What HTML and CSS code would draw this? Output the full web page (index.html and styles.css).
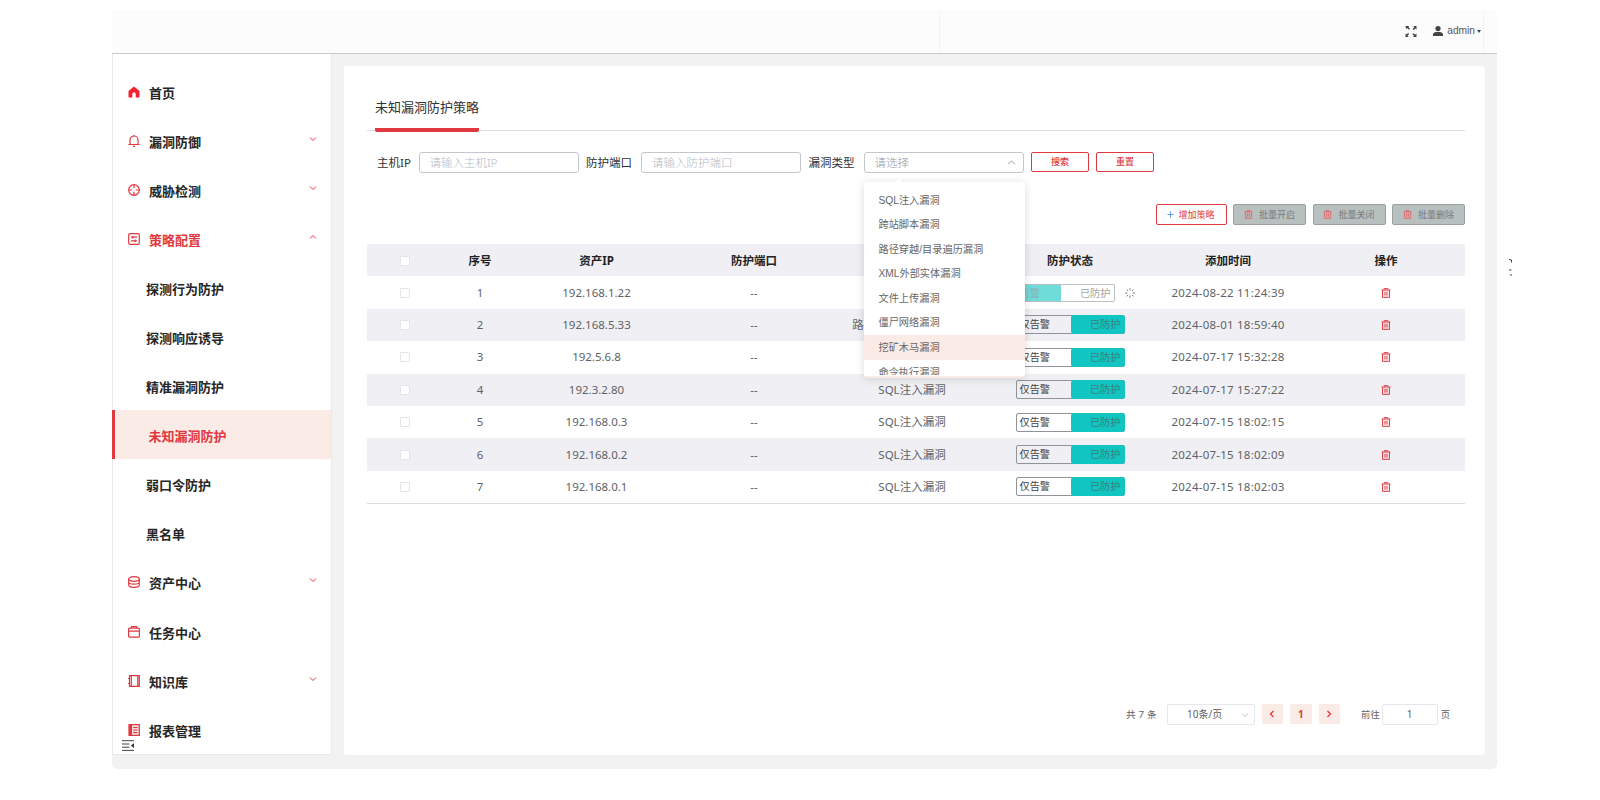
FILE: index.html
```html
<!DOCTYPE html>
<html lang="zh-CN">
<head>
    <meta charset="UTF-8">
    <meta name="viewport" content="width=device-width, initial-scale=1.0">
    <title>未知漏洞防护策略</title>
    <link rel="stylesheet" href="styles.css">
</head>
<body>
    <!-- shared icons -->
    <svg class="sprite">
        <symbol id="i-down" viewBox="0 0 8 8"><path d="M1 2.5l3 3 3-3"/></symbol>
        <symbol id="i-up" viewBox="0 0 8 8"><path d="M1 5.5l3-3 3 3"/></symbol>
        <symbol id="i-trash" viewBox="0 0 10 10"><path d="M.5 2h9M3.2 2V.6h3.6V2M1.500 2v7.400h7V2M4 4v3.500M6 4v3.500"/></symbol>
    </svg>

    <div class="app">
        <header class="header">
            <div class="header-left"></div>
            <div class="header-right">
                <svg class="icon-full" viewBox="0 0 12 12"><path d="M0 0h4.200L3.100 1.100l1.700 1.700-1.200 1.200L1.800 2.200.6 3.400zM12 0v4l-1.200-1.200-1.800 1.600-1.200-1.200L9.600 1.400 8.400 0zM0 12V8.200l1.100 1.100 1.700-1.700L4 8.800l-1.800 1.800L3.600 12zM12 12H8.200l1.200-1.200-1.800-1.800 1.200-1.200 1.800 1.800L12 8.200z"/></svg>
                <svg class="icon-user" viewBox="0 0 10 10"><circle cx="5" cy="2.6" r="2.6"/><path d="M0 10V8.200C0 6.600 2.200 6 5 6s5 .6 5 2.200V10z"/></svg>
                <span>admin</span>
                <i class="caret"></i>
            </div>
        </header>

        <div class="body">
            <nav class="sidebar">
                <ul>
                    <li>
                        <svg class="icon solid" viewBox="0 0 12 12"><path d="M6 .5L11.500 5v6.500H7.700V8a1.700 1.700 0 0 0-3.400 0v3.500H.5V5z"/></svg>首页
                    </li>
                    <li>
                        <svg class="icon" viewBox="0 0 12 12"><path d="M2 9.500V5a4 4 0 0 1 8 0v4.500M.3 9.500h11.400M5 11.300h2M6 0v1"/></svg>漏洞防御
                        <svg class="arrow"><use href="#i-down"/></svg>
                    </li>
                    <li>
                        <svg class="icon" viewBox="0 0 12 12"><circle cx="6" cy="6" r="5.300"/><path d="M6 .7v3.500M6 7.800v3.500M.7 6h3.500M7.800 6h3.500"/></svg>威胁检测
                        <svg class="arrow"><use href="#i-down"/></svg>
                    </li>
                    <li class="open">
                        <svg class="icon" viewBox="0 0 12 12"><rect x=".7" y=".7" width="10.600" height="10.600" rx="1.300"/><path d="M3 4.200h6M4.800 2.900v2.600M3 7.800h6M7.200 6.500v2.600"/></svg>策略配置
                        <svg class="arrow"><use href="#i-up"/></svg>
                    </li>
                    <li class="sub">探测行为防护</li>
                    <li class="sub">探测响应诱导</li>
                    <li class="sub">精准漏洞防护</li>
                    <li class="sub active">未知漏洞防护</li>
                    <li class="sub">弱口令防护</li>
                    <li class="sub">黑名单</li>
                    <li>
                        <svg class="icon" viewBox="0 0 12 12"><ellipse cx="6" cy="3" rx="5.300" ry="2.300"/><path d="M.7 3v6c0 1.300 2.400 2.300 5.300 2.300s5.300-1 5.300-2.300V3M.7 6c0 1.300 2.400 2.200 5.300 2.200s5.300-.9 5.300-2.200"/></svg>资产中心
                        <svg class="arrow"><use href="#i-down"/></svg>
                    </li>
                    <li>
                        <svg class="icon" viewBox="0 0 12 12"><rect x=".6" y="2.200" width="10.800" height="9" rx="1"/><path d="M.6 5.200h10.800M3.500 2.200V.700h5v1.500"/></svg>任务中心
                    </li>
                    <li>
                        <svg class="icon" viewBox="0 0 12 12"><path d="M1.500.7h9.800v10.600H1.500zM3.300.7v10.600M9.800.7v10.600M0 3.500h1.500M0 8.500h1.500"/></svg>知识库
                        <svg class="arrow"><use href="#i-down"/></svg>
                    </li>
                    <li>
                        <svg class="icon tint" viewBox="0 0 12 12"><path d="M1 .7h10.300v10.600H1zM2.200.7v10.600M3.400.7v10.600M5.200 3.500h4.200M5.200 6h4.200M5.200 8.500h4.200"/></svg>报表管理
                    </li>
                </ul>
                <svg class="collapse" viewBox="0 0 12 11"><path d="M0 .7h12M0 4h7.500M0 7.200h7.500M0 10.400h12"/><path class="tri" d="M12 3.200v4.800L8.800 5.600z"/></svg>
            </nav>

            <main class="card">
                <div class="tabs"><span class="tab">未知漏洞防护策略</span></div>

                <div class="search">
                    <label>主机IP</label>
                    <input type="text" placeholder="请输入主机IP">
                    <label>防护端口</label>
                    <input type="text" placeholder="请输入防护端口">
                    <label>漏洞类型</label>
                    <div class="select">
                        请选择
                        <svg><use href="#i-up"/></svg>
                        <div class="dropdown">
                            <ul>
                                <li>SQL注入漏洞</li>
                                <li>跨站脚本漏洞</li>
                                <li>路径穿越/目录遍历漏洞</li>
                                <li>XML外部实体漏洞</li>
                                <li>文件上传漏洞</li>
                                <li>僵尸网络漏洞</li>
                                <li class="hover">挖矿木马漏洞</li>
                                <li>命令执行漏洞</li>
                            </ul>
                        </div>
                    </div>
                    <button class="btn">搜索</button>
                    <button class="btn">重置</button>
                </div>

                <div class="toolbar">
                    <button class="btn add"><svg viewBox="0 0 8 8"><path d="M4 .5v7M.5 4h7"/></svg>增加策略</button>
                    <button class="btn off"><svg><use href="#i-trash"/></svg>批量开启</button>
                    <button class="btn off"><svg><use href="#i-trash"/></svg>批量关闭</button>
                    <button class="btn off"><svg><use href="#i-trash"/></svg>批量删除</button>
                </div>

                <table>
                    <colgroup>
                        <col class="c-check"><col class="c-no"><col class="c-ip"><col><col><col><col><col>
                    </colgroup>
                    <thead>
                        <tr>
                            <th><i class="check"></i></th>
                            <th>序号</th>
                            <th>资产IP</th>
                            <th>防护端口</th>
                            <th></th>
                            <th>防护状态</th>
                            <th>添加时间</th>
                            <th>操作</th>
                        </tr>
                    </thead>
                    <tbody id="rows"></tbody>
                </table>

                <div class="pager">
                    <span class="total">共 7 条</span>
                    <div class="size">10条/页<svg><use href="#i-down"/></svg></div>
                    <button><svg viewBox="0 0 8 8"><path d="M5.500 1l-3 3 3 3"/></svg></button>
                    <button>1</button>
                    <button><svg viewBox="0 0 8 8"><path d="M2.500 1l3 3-3 3"/></svg></button>
                    <span class="goto">前往</span>
                    <div class="page">1</div>
                    <span class="unit">页</span>
                </div>
            </main>
        </div>
    </div>
    <svg class="edge-mark" viewBox="0 0 4 20"><path d="M0 2.500l2.500.5v2.500M0 13h2.500M2 17v2"/></svg>

    <script>
        var rows = [
            ["192.168.1.22", "", "2024-08-22 11:24:39", true],
            ["192.168.5.33", "路径穿越/目录遍历漏洞", "2024-08-01 18:59:40"],
            ["192.5.6.8", "", "2024-07-17 15:32:28"],
            ["192.3.2.80", "SQL注入漏洞", "2024-07-17 15:27:22"],
            ["192.168.0.3", "SQL注入漏洞", "2024-07-15 18:02:15"],
            ["192.168.0.2", "SQL注入漏洞", "2024-07-15 18:02:09"],
            ["192.168.0.1", "SQL注入漏洞", "2024-07-15 18:02:03"]
        ];
        var spinner = '<svg class="spinner" viewBox="0 0 10 10"><path d="M5 0v2.500M5 7.500V10M0 5h2.500M7.500 5H10M1.500 1.500l1.700 1.700M6.800 6.800l1.700 1.700M8.500 1.500L6.800 3.200M3.200 6.800L1.500 8.500"/></svg>';

        document.getElementById("rows").innerHTML = rows.map(function(r, i) {
            return '<tr><td><i class="check"></i></td>' +
                '<td>' + (i + 1) + '</td>' +
                '<td>' + r[0] + '</td>' +
                '<td>--</td>' +
                '<td>' + r[1] + '</td>' +
                '<td><div class="status' + (r[3] ? ' loading' : '') + '">' +
                '<div class="switch"><span>仅告警</span><span>已防护</span></div>' + (r[3] ? spinner : '') + '</div></td>' +
                '<td class="time">' + r[2] + '</td>' +
                '<td><svg class="del"><use href="#i-trash"/></svg></td></tr>';
        }).join("");
    </script>
</body>
</html>
```

FILE: styles.css
```css
* {
    box-sizing: border-box;
}

body {
    margin: 0;
    height: 800px;
    background: #fff;
    color: #303133;
    font-family: "Noto Sans", "Noto Sans CJK SC", sans-serif;
    font-size: 11.5px;
    line-height: 16px;
    overflow: hidden;
}

ul {
    list-style: none;
    margin: 0;
    padding: 0;
}

svg {
    fill: none;
    stroke: currentColor;
    flex: none;
}

.sprite {
    display: none;
}

.app {
    width: 1385px;
    height: 759px;
    margin: 10px 0 0 112px;
    background: #f2f2f2;
    border-radius: 5px;
    overflow: hidden;
}

/* header */
.header {
    height: 44px;
    display: flex;
    background: #fcfcfc;
    border-bottom: 1px solid #cacaca;
}

.header-left {
    width: 828px;
    border-right: 1px solid #f3f3f3;
}

.header-right {
    width: 544px;
    display: flex;
    align-items: center;
    justify-content: flex-end;
    padding: 0 2px 1px 0;
    border-right: 1px solid #f3f3f3;
    font-family: "Liberation Sans", sans-serif;
    font-size: 10.2px;
    color: #555;
}

.header-right svg {
    fill: #444;
    stroke: none;
}

.icon-full {
    width: 12px;
    height: 11px;
    margin-right: 16px;
}

.icon-user {
    width: 10px;
    height: 10px;
    margin-right: 4px;
}

.caret {
    margin-left: 2px;
    border: 2.5px solid transparent;
    border-top: 3px solid #444;
    border-bottom: 0;
}

/* sidebar */
.body {
    display: flex;
}

.sidebar {
    position: relative;
    width: 220px;
    height: 701px;
    padding-top: 13px;
    background: #fff;
    border: 1px solid #e9e9e9;
    border-top: 0;
}

.sidebar li {
    display: flex;
    align-items: center;
    height: 49.05px;
    padding: 3px 14px 0 15px;
    font-size: 13px;
    font-weight: bold;
    color: #262626;
}

.sidebar .icon {
    width: 12px;
    height: 12px;
    margin: 0 9px 2px 0;
    color: #e0383f;
    stroke-width: 1.2;
}

.sidebar .icon.solid {
    fill: #f5222d;
    stroke: none;
}

.sidebar .icon.tint {
    fill: #fbdcdc;
}

.sidebar .arrow {
    width: 8px;
    height: 8px;
    margin: 0 0 6px auto;
    color: #e0383f;
}

.sidebar .open {
    color: #e0383f;
}

.sidebar .sub {
    padding-left: 33px;
}

.sidebar .active {
    margin-left: -1px;
    border-left: 3px solid #e0383f;
    background: #fbebe7;
    color: #e0383f;
    padding-left: 33.5px;
}

.collapse {
    position: absolute;
    left: 9px;
    bottom: 3px;
    width: 12px;
    height: 11px;
    color: #444;
}

.collapse .tri {
    fill: #333;
    stroke: none;
}

/* content */
.card {
    width: 1141px;
    height: 689px;
    margin: 12px 0 0 12px;
    padding: 0 20px 0 23px;
    background: #fff;
    border-radius: 3px;
}

.tabs {
    height: 65px;
    padding-left: 8px;
    border-bottom: 1px solid #dcdde0;
}

.tab {
    display: inline-block;
    height: 66px;
    padding-top: 33px;
    font-size: 13px;
    border-bottom: 4px solid #e0383f;
    border-radius: 2px;
}

.search {
    display: flex;
    align-items: center;
    height: 21px;
    margin-top: 21px;
    padding-left: 10px;
    line-height: 21px;
}

.search label {
    width: 46.5px;
    margin-right: 8.5px;
    white-space: nowrap;
}

.search label:first-child {
    width: 33px;
}

.search input,
.select {
    width: 160px;
    height: 21px;
    margin: 0 7.5px 0 0;
    padding: 0 10px;
    border: 1px solid #c3c6cc;
    border-radius: 3px;
    background: #fff;
    font: 300 11.5px/18px "Noto Sans", "Noto Sans CJK SC", sans-serif;
    color: #96999f;
}

.search input::placeholder {
    color: #b4b8c0;
}

.select {
    position: relative;
    display: flex;
    align-items: center;
    justify-content: space-between;
}

.select > svg {
    width: 9px;
    height: 9px;
    margin-right: -3px;
    stroke-width: .8;
}

.dropdown {
    position: absolute;
    z-index: 2;
    left: -1px;
    top: 29px;
    width: 161px;
    height: 196px;
    padding-top: 5.5px;
    background: #fff;
    border-bottom: 2px solid #fbebe7;
    border-radius: 3px;
    box-shadow: 0 1px 8px rgba(0, 0, 0, .15);
}

.dropdown::before {
    content: "";
    position: absolute;
    left: 31px;
    top: -3px;
    border: 4px solid transparent;
    border-top: 0;
    border-bottom: 3px solid #fff;
}

.dropdown ul {
    height: 187px;
    overflow: hidden;
}

.dropdown li {
    height: 24.6px;
    padding: 1px 0 0 15px;
    line-height: 24.6px;
    font-family: "Liberation Sans", "Noto Sans CJK SC", sans-serif;
    font-size: 10.2px;
    font-weight: 400;
    color: #666;
}

.dropdown .hover {
    background: #fbebe7;
}

.btn {
    display: flex;
    align-items: center;
    justify-content: center;
    width: 58px;
    height: 20px;
    margin: 0 7px 0 0;
    padding: 0;
    background: #fff;
    border: 1px solid #e0383f;
    border-radius: 2px;
    font: 9px/18px "Noto Sans", "Noto Sans CJK SC", sans-serif;
    color: #e0383f;
}

.search .btn {
    font-weight: 500;
    margin-bottom: 1px;
}

.toolbar {
    display: flex;
    justify-content: flex-end;
    gap: 6.5px;
    margin-top: 31px;
}

.toolbar .btn {
    width: 73px;
    height: 21px;
    margin: 0;
}

.toolbar .add {
    width: 71px;
}

.btn svg {
    width: 9px;
    height: 9px;
    margin-right: 6px;
}

.btn.add svg {
    width: 7px;
    height: 7px;
    margin-right: 4px;
    color: #4a90e2;
}

.btn.off {
    background: #b8bfbf;
    border-color: #9aa0a2;
    color: #777c7e;
}

.btn.off svg {
    color: #e56a6a;
}

/* table */
table {
    width: 1098px;
    margin-top: 19px;
    table-layout: fixed;
    border-collapse: collapse;
    border-bottom: 1px solid #dcdde0;
    text-align: center;
    color: #606266;
}

.c-check {
    width: 75px;
}

.c-no {
    width: 76px;
}

.c-ip {
    width: 157px;
}

th, td {
    height: 32.4px;
    padding: 0;
    white-space: nowrap;
}

th {
    color: #222;
    padding-top: 1px;
}

thead tr,
tbody tr:nth-child(even) {
    background: #efeff4;
}

.time {
    letter-spacing: .23px;
}

.check {
    display: block;
    width: 10px;
    height: 10px;
    margin: 0 auto;
    background: #fff;
    border: 1px solid #e4e5e9;
    border-radius: 1px;
}

.status {
    display: flex;
    align-items: center;
    justify-content: center;
    gap: 10px;
}

.switch {
    position: relative;
    display: flex;
    justify-content: space-between;
    width: 109px;
    height: 19px;
    border: 1px solid #909399;
    border-radius: 2px;
    font-size: 10.2px;
    line-height: 17px;
    color: #444;
}

.switch span {
    width: 54px;
    padding-left: 3px;
    text-align: left;
}

.switch span:last-child {
    margin: -1px;
    padding: 1px 4px 0 0;
    text-align: right;
    border-radius: 3px;
    background: #11c5c2;
    color: #3b7f80;
}

.loading .switch {
    opacity: .6;
    height: 18px;
    line-height: 16px;
}

.loading .switch span:first-child {
    background: #11c5c2;
    color: #3b7f80;
}

.loading .switch span:last-child {
    background: none;
    color: #666;
}

.spinner {
    width: 10px;
    height: 10px;
    color: #888;
}

.del {
    display: block;
    width: 10px;
    height: 10px;
    margin: 0 auto;
    color: #e0444b;
}

.del,
.btn.off svg {
    fill: rgba(245, 90, 90, .15);
}

/* pagination */
.pager {
    display: flex;
    align-items: center;
    justify-content: flex-end;
    height: 21px;
    margin-top: 200px;
    padding-right: 15px;
    font-size: 10px;
    line-height: 19px;
    color: #606266;
}

.total {
    margin-right: 10px;
    font-size: 9.6px;
    word-spacing: .5px;
}

.size,
.page {
    position: relative;
    width: 88px;
    height: 21px;
    padding-right: 12px;
    border: 1px solid #e6e7ea;
    border-radius: 2px;
    text-align: center;
}

.size svg {
    position: absolute;
    right: 5px;
    top: 6px;
    width: 8px;
    height: 8px;
    color: #bbb;
}

.pager button {
    display: flex;
    align-items: center;
    justify-content: center;
    width: 21.5px;
    height: 20px;
    margin-left: 7px;
    padding: 0;
    border: 0;
    border-radius: 1px;
    background: #fbebe7;
    color: #e0383f;
    font: bold 10px "Noto Sans", sans-serif;
}

.pager button svg {
    width: 8px;
    height: 8px;
    stroke-width: 1.3;
}

.goto,
.unit {
    font-size: 9.3px;
}

.goto {
    margin: 0 2px 0 21px;
}

.page {
    width: 56px;
    padding: 0;
    margin-right: 3px;
}

/* cut-off glyph at the right edge */
.edge-mark {
    position: absolute;
    left: 1509px;
    top: 257px;
    width: 4px;
    height: 20px;
    color: #444;
}
```
